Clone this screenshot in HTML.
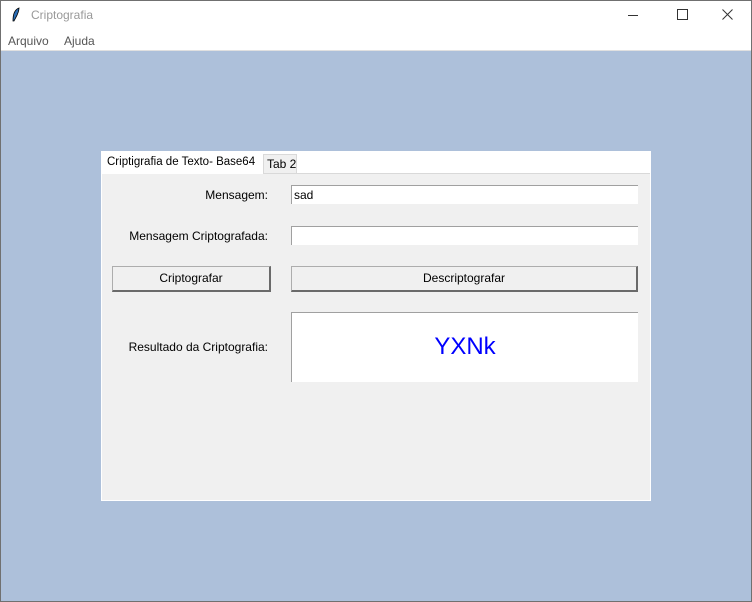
<!DOCTYPE html><html><head><style>
body{margin:0;width:752px;height:602px;position:relative;overflow:hidden;font-family:"Liberation Sans",sans-serif;font-size:12px;background:#adc0da}
.a{position:absolute;white-space:nowrap}
.win{left:0;top:0;width:750px;height:600px;border:1px solid #707070}
.lbl{color:#000;text-align:right}
.ent{background:#fff;border-top:1px solid #a0a0a0;border-left:1px solid #a0a0a0;box-sizing:border-box}
.btn{background:#f0f0f0;border:1px solid #adadad;border-right:2px solid #6a6a6a;border-bottom:2px solid #6a6a6a;box-sizing:border-box;text-align:center;line-height:23px}
</style></head><body>
<div class="a win"></div>
<div class="a" style="left:1px;top:1px;width:750px;height:49px;background:#fff;border-bottom:1px solid #e0e0e0"></div>
<svg class="a" style="left:11px;top:7px" width="10" height="16"><path d="M8 1 C3 3 2 8 2 14 L3 14 C5 10 8 6 8 1Z" fill="#2a6db5" stroke="#000" stroke-width="0.8"/></svg>
<div class="a" style="left:31px;top:8px;color:#999;font-size:12px">Criptografia</div>
<div class="a" style="left:628px;top:15px;width:10px;height:1px;background:#333"></div>
<div class="a" style="left:677px;top:9px;width:9px;height:9px;border:1px solid #333"></div>
<svg class="a" style="left:722px;top:9px" width="11" height="11"><path d="M0.5 0.5L10.5 10.5M10.5 0.5L0.5 10.5" stroke="#333" stroke-width="1"/></svg>
<div class="a" style="left:8px;top:34px;color:#555">Arquivo</div>
<div class="a" style="left:64px;top:34px;color:#555">Ajuda</div>
<div class="a" style="left:101px;top:151px;width:550px;height:350px;background:#fff"></div>
<div class="a" style="left:102px;top:173px;width:548px;height:326px;background:#f0f0f0;border-top:1px solid #d9d9d9"></div>
<div class="a" style="left:102px;top:152px;width:161px;height:22px;background:#fff;line-height:21px;padding-left:5px;box-sizing:border-box;font-size:11.5px">Criptigrafia de Texto- Base64</div>
<div class="a" style="left:263px;top:154px;width:34px;height:19px;background:#f0f0f0;border:1px solid #d9d9d9;border-bottom:none;box-sizing:border-box;line-height:19px;padding-left:3px">Tab 2</div>
<div class="a lbl" style="left:102px;top:188px;width:166px">Mensagem:</div>
<div class="a lbl" style="left:102px;top:229px;width:166px">Mensagem Criptografada:</div>
<div class="a lbl" style="left:102px;top:340px;width:166px">Resultado da Criptografia:</div>
<div class="a ent" style="left:291px;top:185px;width:347px;height:19px;padding:2px 0 0 2px">sad</div>
<div class="a ent" style="left:291px;top:226px;width:347px;height:19px"></div>
<div class="a btn" style="left:112px;top:266px;width:159px;height:26px">Criptografar</div>
<div class="a btn" style="left:291px;top:266px;width:347px;height:26px">Descriptografar</div>
<div class="a ent" style="left:291px;top:312px;width:347px;height:70px;text-align:center;line-height:68px;font-size:24px;color:#0000ff">YXNk</div>
</body></html>
